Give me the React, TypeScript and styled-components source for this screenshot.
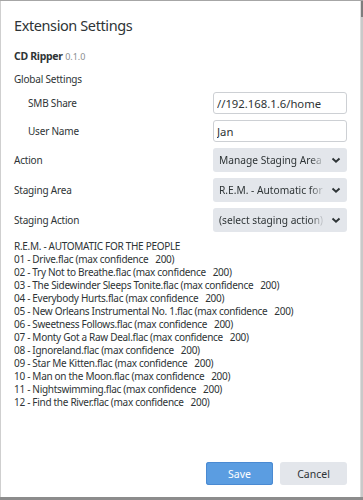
import React from 'react';
import styled, { createGlobalStyle } from 'styled-components';

const GlobalStyle = createGlobalStyle`
    html, body {
        margin: 0;
        padding: 0;
        background: #d4d4d4;
    }
    body {
        font-family: "Noto Sans", "Open Sans", sans-serif;
        color: #2e3436;
    }
`;

const Screen = styled.div`
    width: 363px;
    height: 500px;
    display: flex;
    flex-direction: column;
    overflow: hidden;
`;

const TopEdge = styled.div`
    height: 1px;
    background: #a6a6a6;
`;

const Middle = styled.div`
    flex: 1;
    display: flex;
    min-height: 0;
`;

const LeftEdge = styled.div`
    width: 1px;
    background: #cfcfcf;
`;

const Dialog = styled.div`
    flex: 1;
    background: #ffffff;
    border-right: 1px solid #dcdcdc;
    display: flex;
    flex-direction: column;
    padding: 12px 13px 12px 12px;
`;

const Scrollbar = styled.div`
    width: 2px;
    display: flex;
    flex-direction: column;
    background: #c9c9c9;
`;

const Thumb = styled.div<{ $grow?: boolean }>`
    height: ${p => (p.$grow ? 'auto' : '16px')};
    flex: ${p => (p.$grow ? 1 : 'none')};
    background: ${p => (p.$grow ? '#c9c9c9' : '#7d7d7d')};
`;

const BottomEdge = styled.div`
    height: 3px;
    background: #8c8c8c;
`;

const Title = styled.h1`
    margin: 0 0 0 1px;
    font-size: 14.5px;
    font-weight: 400;
    letter-spacing: -0.4px;
    line-height: 24px;
    color: #2e3436;
`;

const ExtName = styled.div`
    margin: 11px 0 0 1px;
    font-size: 10.5px;
    font-weight: 700;
    letter-spacing: -0.3px;
    line-height: 16px;
    & span {
        font-weight: 400;
        font-size: 9px;
        letter-spacing: 0;
        color: #8a8e91;
    }
`;

const Section = styled.div`
    margin: 6px 0 0 1px;
    font-size: 10px;
    letter-spacing: -0.2px;
    line-height: 16px;
`;

const Row = styled.div<{ $indent?: boolean; $top: number }>`
    display: flex;
    align-items: center;
    justify-content: space-between;
    margin-top: ${p => p.$top}px;
    padding-left: ${p => (p.$indent ? 15 : 1)}px;
    font-size: 10px;
    letter-spacing: -0.2px;
`;

const TextInput = styled.input`
    box-sizing: border-box;
    width: 134px;
    height: 22px;
    border: 1px solid #cdd0d4;
    border-radius: 3px;
    padding: 2px 3px;
    font-family: inherit;
    font-size: 11.3px;
    letter-spacing: 0;
    color: #2e3436;
    background: #ffffff;
    outline: none;
`;

const SelectBox = styled.div`
    box-sizing: border-box;
    width: 134px;
    height: 24px;
    border-radius: 3px;
    background: #e3e6eb;
    display: flex;
    align-items: center;
    padding: 0 6px 0 6px;
    font-size: 10.2px;
    letter-spacing: 0;
    gap: 6px;
`;

const SelectText = styled.span`
    flex: 1;
    overflow: hidden;
    white-space: nowrap;
    -webkit-mask-image: linear-gradient(to right, #000 86%, transparent 100%);
    mask-image: linear-gradient(to right, #000 86%, transparent 100%);
`;

const TrackList = styled.div`
    margin: 8px 0 0 1px;
    font-size: 10px;
    letter-spacing: -0.3px;
    line-height: 13px;
    white-space: pre;
`;

const Spacer = styled.div`
    flex: 1;
`;

const Buttons = styled.div`
    display: flex;
    justify-content: flex-end;
    gap: 7px;
    margin-bottom: 0;
`;

const Button = styled.button<{ $primary?: boolean }>`
    width: 67px;
    height: 23px;
    border: none;
    border-radius: 3px;
    font-family: inherit;
    font-size: 10.5px;
    color: ${p => (p.$primary ? '#ffffff' : '#2e3436')};
    background: ${p => (p.$primary ? '#5b9de1' : '#e3e6eb')};
    box-shadow: ${p => (p.$primary ? 'inset 0 0 0 1px #4a8ad2' : 'none')};
`;

const Chevron = () => (
    <svg width="10" height="10" viewBox="0 0 10 10">
        <path d="M1.5 3.5 L5 6.8 L8.5 3.5" fill="none" stroke="#2e3436" strokeWidth="1.9" />
    </svg>
);

const Select = ({ value }: { value: string }) => (
    <SelectBox>
        <SelectText>{value}</SelectText>
        <Chevron />
    </SelectBox>
);

const tracks = [
    '01 - Drive.flac',
    '02 - Try Not to Breathe.flac',
    '03 - The Sidewinder Sleeps Tonite.flac',
    '04 - Everybody Hurts.flac',
    '05 - New Orleans Instrumental No. 1.flac',
    '06 - Sweetness Follows.flac',
    '07 - Monty Got a Raw Deal.flac',
    '08 - Ignoreland.flac',
    '09 - Star Me Kitten.flac',
    '10 - Man on the Moon.flac',
    '11 - Nightswimming.flac',
    '12 - Find the River.flac',
];

const App = () => (
    <>
        <GlobalStyle />
        <Screen>
            <TopEdge />
            <Middle>
                <LeftEdge />
                <Dialog>
                    <Title>Extension Settings</Title>
                    <ExtName>
                        CD Ripper <span>0.1.0</span>
                    </ExtName>
                    <Section>Global Settings</Section>
                    <Row $indent $top={5}>
                        <span>SMB Share</span>
                        <TextInput defaultValue="//192.168.1.6/home" />
                    </Row>
                    <Row $indent $top={6}>
                        <span>User Name</span>
                        <TextInput defaultValue="Jan" />
                    </Row>
                    <Row $top={6}>
                        <span>Action</span>
                        <Select value="Manage Staging Area" />
                    </Row>
                    <Row $top={6}>
                        <span>Staging Area</span>
                        <Select value="R.E.M. - Automatic for the People" />
                    </Row>
                    <Row $top={6}>
                        <span>Staging Action</span>
                        <Select value="(select staging action)" />
                    </Row>
                    <TrackList>
                        {'R.E.M. - AUTOMATIC FOR THE PEOPLE\n'}
                        {tracks.map(t => `${t} (max confidence   200)`).join('\n')}
                    </TrackList>
                    <Spacer />
                    <Buttons>
                        <Button $primary>Save</Button>
                        <Button>Cancel</Button>
                    </Buttons>
                </Dialog>
                <Scrollbar>
                    <Thumb />
                    <Thumb $grow />
                </Scrollbar>
            </Middle>
            <BottomEdge />
        </Screen>
    </>
);

export default App;
